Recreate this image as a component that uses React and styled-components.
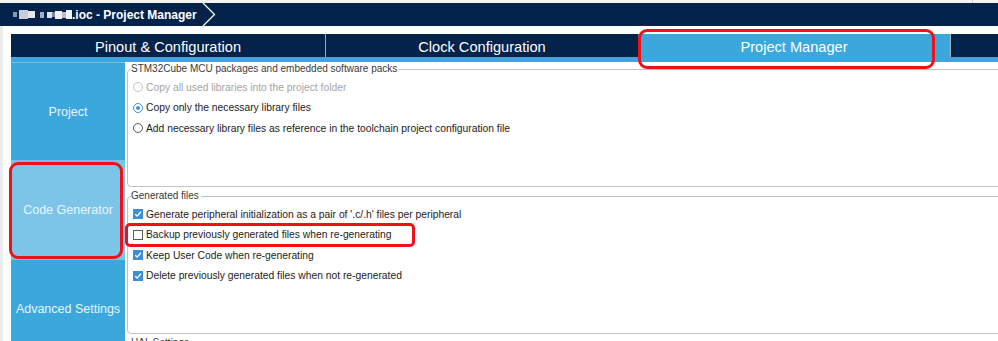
import React from "react";
import styled, { createGlobalStyle } from "styled-components";

const GlobalStyle = createGlobalStyle`
  html, body {
    margin: 0;
    padding: 0;
    background: #ffffff;
  }
  body {
    font-family: "Liberation Sans", Arial, sans-serif;
    overflow: hidden;
  }
`;

const NAVY = "#03234b";
const BLUE = "#3aa8dc";
const LIGHT_BLUE = "#7cc4e8";
const CHECK_BLUE = "#3b8fd9";

const Screen = styled.div`
  position: relative;
  width: 998px;
  height: 341px;
  overflow: hidden;
  display: flex;
  flex-direction: column;
  background: #ffffff;
`;

const MenuStrip = styled.div`
  height: 3px;
  background: #f4f4f4;
  display: flex;
  justify-content: flex-end;
`;

const MenuDivider = styled.span`
  width: 1px;
  background: #cfcfcf;
  margin-right: 25px;
`;

const Header = styled.div`
  height: 23px;
  background: ${NAVY};
  display: flex;
  align-items: center;
  padding-left: 13px;
  color: #ffffff;
  font-weight: bold;
  font-size: 12px;
`;

const Redacted = styled.span`
  display: flex;
  align-items: center;
  height: 9px;
  width: 59px;
`;

const Pixel = styled.span`
  display: block;
  width: ${(p) => p.$w}px;
  height: ${(p) => p.$h}px;
  background: ${(p) => p.$c};
`;

const Crumb = styled.span`
  white-space: nowrap;
`;

const Chevron = styled.svg`
  margin-left: 5px;
  flex: none;
`;

const Body = styled.div`
  flex: 1;
  min-height: 0;
  display: flex;
  flex-direction: column;
  border-left: 3px solid #ececec;
  padding: 8px 0 0 8px;
`;

const TabBar = styled.div`
  display: flex;
  height: 23px;
  border-bottom: 5px solid ${BLUE};
  flex: none;
`;

const Tab = styled.div`
  width: ${(p) => p.$w}px;
  flex: none;
  display: flex;
  align-items: center;
  justify-content: center;
  padding-top: 2px;
  box-sizing: border-box;
  font-size: 14.6px;
  color: #ffffff;
  background: ${(p) => (p.$active ? BLUE : NAVY)};
  border-right: ${(p) => (p.$sep ? "1px solid #9aa6b6" : "none")};
`;

const TabFiller = styled.div`
  flex: 1;
  background: ${NAVY};
  border-left: 1px solid #a8b4c2;
`;

const Workspace = styled.div`
  flex: 1;
  min-height: 0;
  display: flex;
`;

const Sidebar = styled.div`
  width: 114px;
  flex: none;
  display: flex;
  flex-direction: column;
  gap: 2px;
  padding-top: 1px;
  background: #76c1e6;
`;

const SideItem = styled.div`
  height: ${(p) => p.$h}px;
  flex: none;
  display: flex;
  align-items: center;
  justify-content: center;
  font-size: 12.5px;
  color: #eaf5fc;
  white-space: nowrap;
  background: ${(p) => (p.$active ? LIGHT_BLUE : BLUE)};
`;

const Content = styled.div`
  flex: 1;
  min-width: 0;
  display: flex;
  flex-direction: column;
  gap: 3px;
  margin-left: 2px;
  padding-top: 1px;
`;

const Group = styled.fieldset`
  margin: 0 -20px 0 0;
  padding: 2px 0 0 5px;
  min-width: 0;
  height: ${(p) => p.$h}px;
  box-sizing: border-box;
  flex: none;
  border: 1px solid #c2c2c2;
  border-radius: 4px;
`;

const Legend = styled.legend`
  font-size: 10px;
  line-height: 12px;
  color: #3a3a3a;
  padding: 0 2px 0 0;
  margin-left: -2px;
`;

const Option = styled.div`
  display: flex;
  align-items: center;
  gap: 3px;
  height: 20.5px;
  font-size: 10.3px;
  color: ${(p) => (p.$disabled ? "#a4a4a4" : "#1c1c1c")};
  white-space: nowrap;
`;

const Radio = styled.span`
  width: 10px;
  height: 10px;
  box-sizing: border-box;
  border-radius: 50%;
  background: #ffffff;
  border: 1px solid
    ${(p) => (p.$disabled ? "#c4c4c4" : p.$checked ? CHECK_BLUE : "#5a5a5a")};
  display: flex;
  align-items: center;
  justify-content: center;
  flex: none;

  &::after {
    content: "";
    display: ${(p) => (p.$checked ? "block" : "none")};
    width: 4px;
    height: 4px;
    border-radius: 50%;
    background: ${CHECK_BLUE};
  }
`;

const Box = styled.span`
  width: 10px;
  height: 10px;
  box-sizing: border-box;
  flex: none;
  display: flex;
  align-items: center;
  justify-content: center;
  background: ${(p) => (p.$checked ? CHECK_BLUE : "#ffffff")};
  border: 1px solid ${(p) => (p.$checked ? CHECK_BLUE : "#5a5a5a")};
`;

const Mark = styled.div`
  position: absolute;
  left: ${(p) => p.$x}px;
  top: ${(p) => p.$y}px;
  width: ${(p) => p.$w}px;
  height: ${(p) => p.$h}px;
  box-sizing: border-box;
  border: 3px solid #ec1218;
  border-radius: ${(p) => p.$r}px;
  pointer-events: none;
`;

const pixels = [
  { w: 4, h: 5, c: "#8c97aa" },
  { w: 2, h: 3, c: "#03234b" },
  { w: 9, h: 9, c: "#c9ced8" },
  { w: 7, h: 7, c: "#e4e7ec" },
  { w: 5, h: 4, c: "#03234b" },
  { w: 4, h: 6, c: "#a5aebd" },
  { w: 3, h: 3, c: "#03234b" },
  { w: 5, h: 6, c: "#dfe3e9" },
  { w: 3, h: 5, c: "#7d889c" },
  { w: 7, h: 8, c: "#eef0f3" },
  { w: 4, h: 6, c: "#b9c0cc" },
  { w: 6, h: 9, c: "#f2f3f5" },
];

const Check = () => (
  <svg width="8" height="8" viewBox="0 0 8 8">
    <path d="M1.2 4.2 L3.2 6.1 L6.9 1.8" fill="none" stroke="#ffffff" strokeWidth="1.4" />
  </svg>
);

const RadioRow = ({ checked, disabled, children }) => (
  <Option $disabled={disabled}>
    <Radio $checked={checked} $disabled={disabled} />
    {children}
  </Option>
);

const CheckRow = ({ checked, children }) => (
  <Option>
    <Box $checked={checked}>{checked && <Check />}</Box>
    {children}
  </Option>
);

const App = () => {
  return (
    <Screen>
      <GlobalStyle />
      <MenuStrip>
        <MenuDivider />
      </MenuStrip>
      <Header>
        <Redacted>
          {pixels.map((p, i) => (
            <Pixel key={i} $w={p.w} $h={p.h} $c={p.c} />
          ))}
        </Redacted>
        <Crumb>.ioc - Project Manager</Crumb>
        <Chevron width="14" height="23" viewBox="0 0 14 23">
          <polyline points="1,0 12.5,11.5 1,23" fill="none" stroke="#ffffff" strokeWidth="1.3" />
        </Chevron>
      </Header>
      <Body>
        <TabBar>
          <Tab $w={315} $sep>Pinout &amp; Configuration</Tab>
          <Tab $w={312}>Clock Configuration</Tab>
          <Tab $w={312} $active>Project Manager</Tab>
          <TabFiller />
        </TabBar>
        <Workspace>
          <Sidebar>
            <SideItem $h={97}>Project</SideItem>
            <SideItem $h={96} $active>Code Generator</SideItem>
            <SideItem $h={98}>Advanced Settings</SideItem>
          </Sidebar>
          <Content>
            <Group $h={124}>
              <Legend>STM32Cube MCU packages and embedded software packs</Legend>
              <RadioRow disabled>Copy all used libraries into the project folder</RadioRow>
              <RadioRow checked>Copy only the necessary library files</RadioRow>
              <RadioRow>Add necessary library files as reference in the toolchain project configuration file</RadioRow>
            </Group>
            <Group $h={144}>
              <Legend>Generated files</Legend>
              <CheckRow checked>Generate peripheral initialization as a pair of '.c/.h' files per peripheral</CheckRow>
              <CheckRow>Backup previously generated files when re-generating</CheckRow>
              <CheckRow checked>Keep User Code when re-generating</CheckRow>
              <CheckRow checked>Delete previously generated files when not re-generated</CheckRow>
            </Group>
            <Group $h={100}>
              <Legend>HAL Settings</Legend>
            </Group>
          </Content>
        </Workspace>
      </Body>
      <Mark $x={638} $y={29} $w={297} $h={40} $r={9} />
      <Mark $x={9} $y={162} $w={114} $h={97} $r={9} />
      <Mark $x={125} $y={223} $w={290} $h={24} $r={5} />
    </Screen>
  );
};

export default App;
